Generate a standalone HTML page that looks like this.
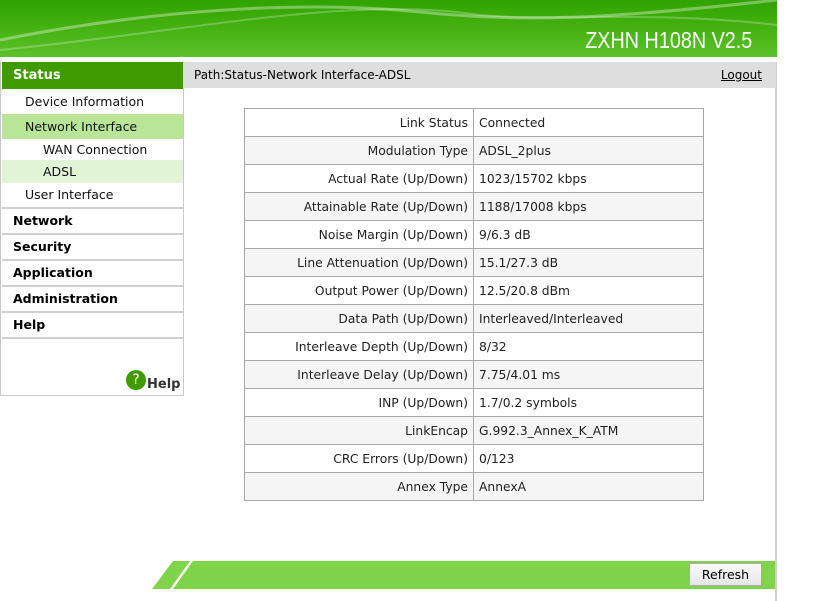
<!DOCTYPE html>
<html><head><style>
*{margin:0;padding:0;box-sizing:border-box}
body{width:819px;height:601px;background:#fff;position:relative;overflow:hidden;font-family:"DejaVu Sans",Verdana,sans-serif;font-size:12px;color:#000}
.abs{position:absolute}
#hdr{left:0;top:0;width:777px;height:57px;background:linear-gradient(180deg,#2fa300 0%,#44b010 45%,#5cc22a 100%);overflow:hidden}
#title{right:25px;top:27px;color:#fff;font-family:"Liberation Sans",Arial,sans-serif;font-size:23px;transform:scaleX(0.86);transform-origin:right top}
#nav{left:0;top:62px;width:184px;height:334px;border:1px solid #c8c8c8;border-top:none}
.it{position:absolute;left:1px;width:181px;padding-left:23px;line-height:25px;font-size:12.5px;color:#111}
.b{font-weight:bold;padding-left:11px;border-bottom:2px solid #d0d0d0;line-height:24px;color:#000}
#rl{left:775px;top:62px;width:2px;height:539px;background:#d0d0d0}
#path{left:183px;top:62px;width:593px;height:26px;background:#dedede;line-height:26px;padding-left:11px;font-size:12px}
table{position:absolute;left:244px;top:108px;border-collapse:collapse;width:460px}
td{border:1px solid #a8a8a8;height:28px;font-size:12.3px;padding:0 5px;color:#222}
td:first-child{text-align:right;width:229px}
tr:nth-child(even) td{background:#f5f5f5}
</style></head><body>
<div id="hdr" class="abs">
<svg width="777" height="57" style="position:absolute;left:0;top:0">
<path d="M0 40 C150 10 300 0 420 12 C520 22 600 20 777 0" stroke="rgba(255,255,255,0.35)" stroke-width="3" fill="none"/>
<path d="M0 50 C200 30 350 -5 480 15 C560 22 650 10 777 25" stroke="rgba(255,255,255,0.25)" stroke-width="2" fill="none"/>
</svg>
<div id="title" class="abs">ZXHN H108N V2.5</div>
</div>
<div id="nav" class="abs">
<div class="abs" style="left:1px;top:0;width:181px;height:27px;background:#3f9b00;color:#fff;font-weight:bold;line-height:27px;padding-left:11px;font-size:13px">Status</div>
<div class="it" style="top:27px">Device Information</div>
<div class="it" style="top:52px;background:#b8e597">Network Interface</div>
<div class="it" style="top:77px;padding-left:41px;line-height:21px">WAN Connection</div>
<div class="it" style="top:98px;padding-left:41px;line-height:23px;background:#e2f4d6">ADSL</div>
<div class="it" style="top:121px;border-bottom:2px solid #d0d0d0;line-height:24px">User Interface</div>
<div class="it b" style="top:147px">Network</div>
<div class="it b" style="top:173px">Security</div>
<div class="it b" style="top:199px">Application</div>
<div class="it b" style="top:225px">Administration</div>
<div class="it b" style="top:251px">Help</div>
<div class="abs" style="left:125px;top:308px;width:20px;height:20px;border-radius:50%;background:#3f9b00;color:#fff;text-align:center;line-height:20px;font-size:14px">?</div>
<div class="abs" style="left:146px;top:315px;font-weight:bold;color:#333;font-size:13px">Help</div>
</div>
<div id="rl" class="abs"></div>
<div id="path" class="abs">Path:Status-Network Interface-ADSL<span style="position:absolute;right:14px;text-decoration:underline">Logout</span></div>
<table>
<tr><td>Link Status</td><td>Connected</td></tr>
<tr><td>Modulation Type</td><td>ADSL_2plus</td></tr>
<tr><td>Actual Rate (Up/Down)</td><td>1023/15702 kbps</td></tr>
<tr><td>Attainable Rate (Up/Down)</td><td>1188/17008 kbps</td></tr>
<tr><td>Noise Margin (Up/Down)</td><td>9/6.3 dB</td></tr>
<tr><td>Line Attenuation (Up/Down)</td><td>15.1/27.3 dB</td></tr>
<tr><td>Output Power (Up/Down)</td><td>12.5/20.8 dBm</td></tr>
<tr><td>Data Path (Up/Down)</td><td>Interleaved/Interleaved</td></tr>
<tr><td>Interleave Depth (Up/Down)</td><td>8/32</td></tr>
<tr><td>Interleave Delay (Up/Down)</td><td>7.75/4.01 ms</td></tr>
<tr><td>INP (Up/Down)</td><td>1.7/0.2 symbols</td></tr>
<tr><td>LinkEncap</td><td>G.992.3_Annex_K_ATM</td></tr>
<tr><td>CRC Errors (Up/Down)</td><td>0/123</td></tr>
<tr><td>Annex Type</td><td>AnnexA</td></tr>
</table>
<svg class="abs" style="left:152px;top:561px" width="623" height="28">
<polygon points="0,28 21,0 623,0 623,28" fill="#80d44a"/>
<polygon points="18,28 38,0 41,0 21,28" fill="#fff"/>
</svg>
<div class="abs" style="left:689px;top:563px;width:73px;height:23px;background:linear-gradient(#fafafa,#e6e6e6);border:1px solid #aaa;text-align:center;line-height:21px;font-size:12.5px">Refresh</div>
</body></html>
